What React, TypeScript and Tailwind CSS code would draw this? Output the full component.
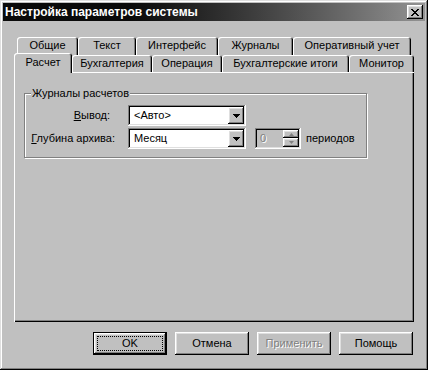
const raised =
  'shadow-[inset_-1px_-1px_#000,inset_1px_1px_#fff,inset_-2px_-2px_#808080,inset_2px_2px_#dfdfdf]';
const sunken =
  'shadow-[inset_-1px_-1px_#fff,inset_1px_1px_#808080,inset_-2px_-2px_#dfdfdf,inset_2px_2px_#000]';

const backRow = [
  { label: 'Общие', w: 'w-[61px]' },
  { label: 'Текст', w: 'w-[58px]' },
  { label: 'Интерфейс', w: 'w-[82px]' },
  { label: 'Журналы', w: 'w-[75px]' },
  { label: 'Оперативный учет', w: 'w-[118px]' },
];

const frontRow = [
  { label: 'Бухгалтерия', w: 'w-[80px]' },
  { label: 'Операция', w: 'w-[70px]' },
  { label: 'Бухгалтерские итоги', w: 'w-[127px]' },
  { label: 'Монитор', w: 'w-[65px]' },
];

const tabEdge =
  'rounded-t-[3px] shadow-[inset_1px_1px_#fff,inset_-1px_0_#000,inset_-2px_0_#808080]';

function DownArrow({ color = '#000' }: { color?: string }) {
  return (
    <svg width="7" height="4" viewBox="0 0 7 4">
      <path d="M0 0h7L3.5 4z" fill={color} shapeRendering="crispEdges" />
    </svg>
  );
}

function Combo({ value }: { value: string }) {
  return (
    <div className={`w-[118px] h-[21px] bg-white p-[2px] flex ${sunken}`}>
      <div className="flex-1 flex items-center pl-[4px]">{value}</div>
      <div className={`w-[16px] h-[17px] bg-[#c0c0c0] flex items-center justify-center ${raised}`}>
        <DownArrow />
      </div>
    </div>
  );
}

function Button({ label, isDefault, disabled }: { label: string; isDefault?: boolean; disabled?: boolean }) {
  if (isDefault) {
    return (
      <div className="w-[74px] h-[23px] p-[4px] flex shadow-[inset_0_0_0_1px_#000,inset_-2px_-2px_#000,inset_2px_2px_#fff,inset_-3px_-3px_#808080,inset_3px_3px_#dfdfdf]">
        <span className="flex-1 flex items-center justify-center border border-dotted border-black">{label}</span>
      </div>
    );
  }
  return (
    <div
      className={`w-[74px] h-[23px] flex items-center justify-center ${raised} ${
        disabled ? 'text-[#808080] [text-shadow:1px_1px_#fff]' : ''
      }`}
    >
      {label}
    </div>
  );
}

export default function App() {
  return (
    <div
      className="w-[428px] h-[370px] bg-[#c0c0c0] p-[3px] flex flex-col text-[11px] text-black leading-none shadow-[inset_-1px_-1px_#000,inset_1px_1px_#dfdfdf,inset_-2px_-2px_#808080,inset_2px_2px_#fff]"
      style={{ fontFamily: '"Liberation Sans", Arial, sans-serif' }}
    >
      {/* title bar */}
      <div className="h-[18px] flex items-center pl-[2px] pr-[2px] bg-gradient-to-r from-[#0a0a0a] from-30% to-[#939393]">
        <span className="flex-1 text-white font-bold text-[12px]">Настройка параметров системы</span>
        <div className={`w-[16px] h-[14px] bg-[#c0c0c0] flex items-center justify-center ${raised}`}>
          <svg width="8" height="7" viewBox="0 0 8 7">
            <path
              d="M0 0h2v1h1v1h2V1h1V0h2v1H7v1H6v1H5v1h1v1h1v1h1v1H6V6H5V5H3v1H2v1H0V6h1V5h1V4h1V3H2V2H1V1H0z"
              fill="#000"
              shapeRendering="crispEdges"
            />
          </svg>
        </div>
      </div>

      <div className="flex-1 flex flex-col px-[11px] pt-[16px] pb-[12px]">
        {/* tabs */}
        <div className="flex ml-[3px] h-[18px]">
          {backRow.map((t) => (
            <div key={t.label} className={`${t.w} h-full flex items-center justify-center pb-[1px] ${tabEdge}`}>
              {t.label}
            </div>
          ))}
        </div>
        <div className="flex items-end h-[17px] relative z-10">
          <div className={`w-[58px] h-[20px] -mb-[1px] bg-[#c0c0c0] flex items-center justify-center pb-[2px] ${tabEdge}`}>
            Расчет
          </div>
          {frontRow.map((t) => (
            <div key={t.label} className={`${t.w} h-full bg-[#c0c0c0] flex items-center justify-center ${tabEdge}`}>
              {t.label}
            </div>
          ))}
        </div>

        {/* panel */}
        <div className="h-[250px] pl-[10px] pt-[21px] shadow-[inset_1px_1px_#fff,inset_-1px_-1px_#000,inset_-2px_-2px_#808080]">
          <div className="relative w-[343px] h-[65px] border border-[#808080] shadow-[1px_1px_#fff,inset_1px_1px_#fff] pl-[6px] pt-[11px]">
            <span className="absolute left-[6px] -top-[6px] bg-[#c0c0c0] px-[1px]">Журналы расчетов</span>
            <div className="flex items-center h-[21px]">
              <div className="w-[84px] text-right pr-[5px]">
                <u>В</u>ывод:
              </div>
              <div className="ml-[13px]">
                <Combo value="<Авто>" />
              </div>
            </div>
            <div className="flex items-center h-[21px] mt-[2px]">
              <div className="w-[84px] text-right">
                <u>Г</u>лубина архива:
              </div>
              <div className="ml-[13px]">
                <Combo value="Месяц" />
              </div>
              <div className={`ml-[9px] w-[46px] h-[21px] p-[2px] flex ${sunken}`}>
                <div className="flex-1 flex items-center pl-[3px] text-[#808080] [text-shadow:1px_1px_#fff]">0</div>
                <div className="w-[16px] flex flex-col">
                  <div className={`h-[8px] flex items-center justify-center ${raised}`}>
                    <svg width="5" height="3" viewBox="0 0 5 3">
                      <path d="M2.5 0L5 3H0z" fill="#808080" />
                    </svg>
                  </div>
                  <div className={`h-[9px] flex items-center justify-center ${raised}`}>
                    <svg width="5" height="3" viewBox="0 0 5 3">
                      <path d="M0 0h5L2.5 3z" fill="#808080" />
                    </svg>
                  </div>
                </div>
              </div>
              <span className="ml-[5px]">периодов</span>
            </div>
          </div>
        </div>

        {/* buttons */}
        <div className="mt-[10px] flex gap-[8px] justify-end pr-[1px]">
          <Button label="OK" isDefault />
          <Button label="Отмена" />
          <Button label="Применить" disabled />
          <Button label="Помощь" />
        </div>
      </div>
    </div>
  );
}
